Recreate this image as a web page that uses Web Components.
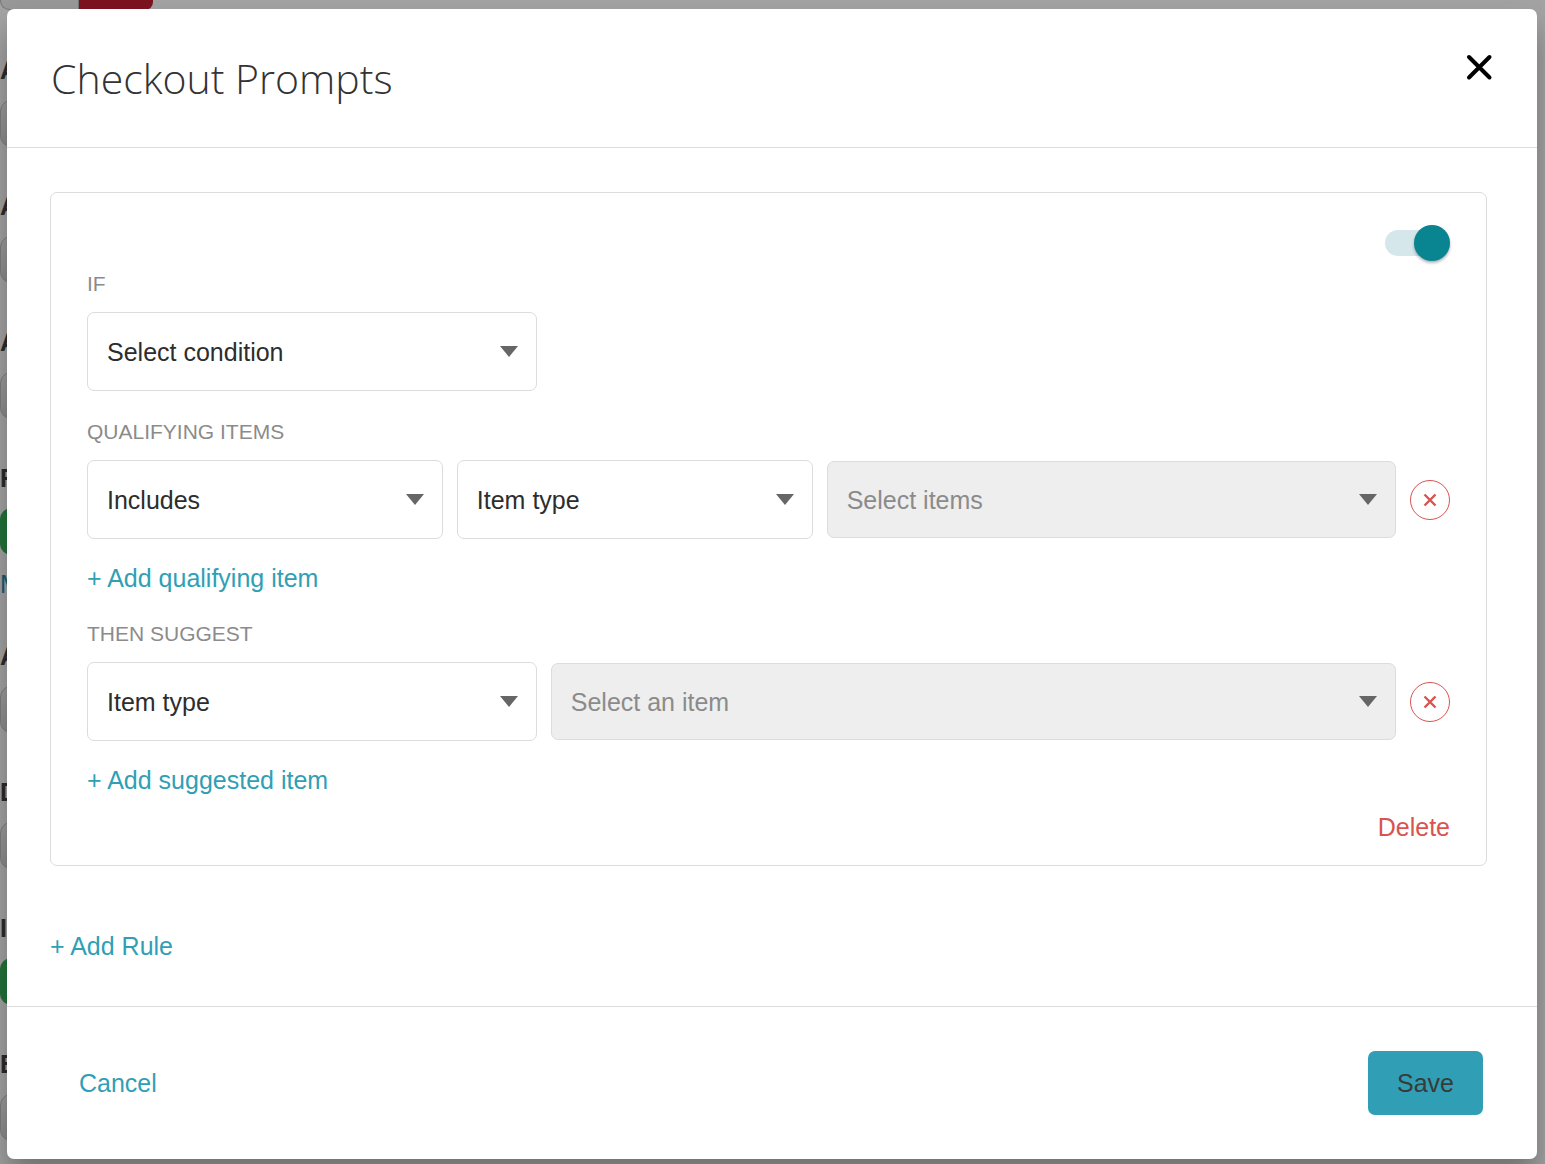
<!DOCTYPE html>
<html lang="en">
<head>
<meta charset="utf-8">
<title>Checkout Prompts</title>
<style>
  html, body { margin: 0; min-height: 100%; background: #fff; }
  body {
    position: relative; overflow: hidden;
    font: 25px/30px "Liberation Sans", Arial, sans-serif; color: #2d2d2d;
    --teal: #309fb5; --red: #d9534f; --line: #dcdcdc;
  }
  modal-overlay { position: absolute; inset: 0; }
</style>
</head>
<body>
<settings-page></settings-page>
<modal-overlay>
  <modal-dialog heading="Checkout Prompts">
    <rule-card>
      <rule-group label="IF">
        <select-field class="third" name="Condition" value="Select condition"></select-field>
      </rule-group>
      <rule-group label="QUALIFYING ITEMS" action="+ Add qualifying item">
        <select-field class="five" name="Includes or excludes" value="Includes"></select-field>
        <select-field class="five" name="Qualifying item type" value="Item type"></select-field>
        <select-field class="eight" name="Qualifying items" value="Select items" disabled></select-field>
        <remove-button></remove-button>
      </rule-group>
      <rule-group label="THEN SUGGEST" action="+ Add suggested item">
        <select-field class="third" name="Suggested item type" value="Item type"></select-field>
        <select-field class="eight" name="Suggested item" value="Select an item" disabled></select-field>
        <remove-button></remove-button>
      </rule-group>
    </rule-card>
    <text-button class="add">+ Add Rule</text-button>
    <text-button slot="footer">Cancel</text-button>
    <save-button slot="footer">Save</save-button>
  </modal-dialog>
</modal-overlay>

<script>
const define = (name, render) => customElements.define(name, class extends HTMLElement {
  connectedCallback() {
    if (this.shadowRoot) return;
    const tpl = document.createElement('template');
    tpl.innerHTML = render(this);
    this.attachShadow({ mode: 'open' }).append(tpl.content.cloneNode(true));
  }
});

define('setting-row', el => `
<style>
  :host { display: block; margin-bottom: 44px; }
  b { display: block; font-size: 25px; line-height: 30px; color: #444; }
  i { display: block; box-sizing: border-box; width: 90px; height: 47px; margin-top: 15px; border-radius: 11px;
      border: 1px solid #c4c4c4; background: linear-gradient(#f4f4f4, #dadada); }
  :host([on]) i { background: #38b558; border-color: #38b558; }
  a { display: block; margin-top: 14px; color: #1f93ad; text-decoration: none; }
  :host([link]) { margin-bottom: 42px; }
</style>
<b>${el.getAttribute('initial')}</b><i></i>${el.hasAttribute('link') ? `<a href="#">${el.getAttribute('link')}</a>` : ''}`);

define('settings-page', () => `
<style>
  :host { display: block; }
  .bar { display: flex; height: 10px; margin-bottom: 45px; }
  .off, .no { box-sizing: border-box; border-radius: 0 0 0 9px; width: 79px; background: #eee; border: 1px solid #bbb; border-top: 0; }
  .no { width: 74px; background: #c32033; border: 0; border-radius: 0 0 8px 0; }
</style>
<div class="bar"><div class="off"></div><div class="no"></div></div>
<setting-row initial="A"></setting-row>
<setting-row initial="A"></setting-row>
<setting-row initial="A"></setting-row>
<setting-row initial="F" on link="M"></setting-row>
<setting-row initial="A"></setting-row>
<setting-row initial="D"></setting-row>
<setting-row initial="I" on></setting-row>
<setting-row initial="E"></setting-row>`);

define('modal-overlay', () => `
<style>
  :host { display: block; box-sizing: border-box; padding: 9px 8px 5px 7px; background: rgba(0,0,0,.36); overflow: hidden; }
</style><slot></slot>`);

define('modal-dialog', el => `
<style>
  :host { display: block; background: #fff; border-radius: 7px; box-shadow: 0 20px 30px rgba(0,0,0,.3); }
  header { display: flex; justify-content: space-between; align-items: center; height: 138px; padding: 0 44px;
           border-bottom: 1px solid var(--line); }
  h1 { margin: 0; font: 300 41px/50px "Open Sans", Lato, sans-serif; color: #333; }
  .close { display: block; padding: 0; margin-bottom: 22px; border: 0; background: none; cursor: pointer; }
  svg { display: block; }
  main { padding: 44px 50px 45px 43px; }
  footer { display: flex; justify-content: space-between; align-items: center; padding: 44px 54px 44px 72px;
           border-top: 1px solid var(--line); }
</style>
<header>
  <h1>${el.getAttribute('heading')}</h1>
  <button class="close" aria-label="Close"><svg width="28" height="28" viewBox="0 0 28 28" fill="none" stroke="#000" stroke-width="4" stroke-linecap="round"><path d="M4 4 24.5 24.5M24.5 4 4 24.5"/></svg></button>
</header>
<main><slot></slot></main>
<footer><slot name="footer"></slot></footer>`);

define('rule-card', () => `
<style>
  :host { display: flex; flex-direction: column; border: 1px solid var(--line); border-radius: 7px;
          padding: 32px 36px 23px; margin-bottom: 65px; }
  toggle-switch { align-self: flex-end; margin-bottom: 11px; }
  .delete { align-self: flex-end; margin-top: -12px; --tone: var(--red); }
</style>
<toggle-switch></toggle-switch>
<slot></slot>
<text-button class="delete">Delete</text-button>`);

define('toggle-switch', () => `
<style>
  :host { display: block; }
  input { appearance: none; position: relative; display: flex; align-items: center; justify-content: flex-end;
          width: 65px; height: 36px; margin: 0; cursor: pointer; }
  input::before { content: ""; position: absolute; inset: 5px 0; border-radius: 13px; background: #d5e7ea; }
  input::after { content: ""; position: relative; width: 36px; height: 36px; border-radius: 50%; background: #088591;
                 box-shadow: 0 2px 3px rgba(0,0,0,.3); }
  input:not(:checked) { justify-content: flex-start; }
</style>
<input type="checkbox" role="switch" aria-label="Rule enabled" checked>`);

define('rule-group', el => `
<style>
  :host { display: block; margin-bottom: 29px; }
  .label { font-size: 21px; line-height: 24px; color: #8b8b8b; margin-bottom: 16px; }
  .row { display: flex; align-items: center; gap: 14px; }
  .action { margin-top: 24px; }
</style>
<div role="group" aria-labelledby="label">
  <div class="label" id="label">${el.getAttribute('label')}</div>
  <div class="row"><slot></slot></div>
  ${el.hasAttribute('action') ? `<text-button class="action">${el.getAttribute('action')}</text-button>` : ''}
</div>`);

define('select-field', el => `
<style>
  :host { display: grid; align-items: center; min-width: 0; }
  :host(.third) { flex: 0 0 33%; }
  :host(.five) { flex: 5 1 0; }
  :host(.eight) { flex: 8 1 0; }
  select { grid-area: 1 / 1; appearance: none; box-sizing: border-box; width: 100%; height: 79px; margin: 0; padding: 0 50px 0 19px;
           border: 1px solid var(--line); border-radius: 7px; background: #fff; font: inherit; color: #2d2d2d; }
  select:disabled { height: 77px; background: #eee; color: #8b8b8b; opacity: 1; }
  svg { grid-area: 1 / 1; justify-self: end; margin-right: 19px; pointer-events: none; }
</style>
<select aria-label="${el.getAttribute('name')}" ${el.hasAttribute('disabled') ? 'disabled' : ''}><option>${el.getAttribute('value')}</option></select>
<svg width="18" height="11" viewBox="0 0 18 11"><path d="M0 0H18L9 11Z" fill="#666"/></svg>`);

define('remove-button', () => `
<style>
  :host { display: block; flex: none; }
  button { display: grid; place-items: center; box-sizing: border-box; width: 40px; height: 40px; padding: 0;
           border: 1px solid var(--red); border-radius: 50%; background: #fff; cursor: pointer; }
</style>
<button aria-label="Remove"><svg width="14" height="14" viewBox="0 0 14 14" stroke="#d9534f" stroke-width="2.4"><path d="M1.5 1.5 12.5 12.5M12.5 1.5 1.5 12.5"/></svg></button>`);

define('text-button', () => `
<style>
  :host { display: block; }
  button { display: block; padding: 0; border: 0; background: none; font: inherit; color: var(--tone, var(--teal)); cursor: pointer; }
</style>
<button><slot></slot></button>`);

define('save-button', () => `
<style>
  :host { display: block; }
  button { display: block; height: 64px; padding: 0 29px; border: 0; border-radius: 7px; background: var(--teal); font: inherit; color: #3a3a3a; cursor: pointer; }
</style>
<button><slot></slot></button>`);
</script>
</body>
</html>
